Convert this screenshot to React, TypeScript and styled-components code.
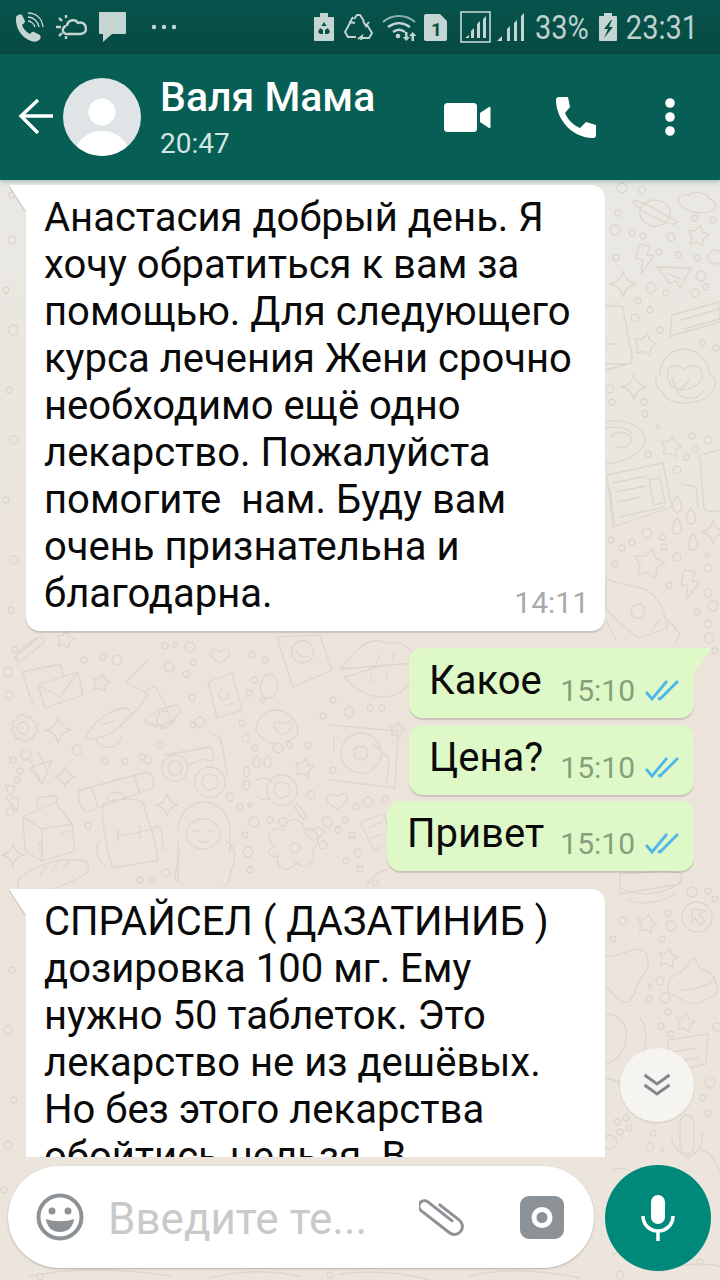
import React from "react";
import styled, { createGlobalStyle } from "styled-components";

const Global = createGlobalStyle`
  html, body { margin: 0; padding: 0; background: #ece5dd; }
  * { box-sizing: border-box; }
`;

const Screen = styled.div`
  width: 720px;
  height: 1280px;
  display: flex;
  flex-direction: column;
  overflow: hidden;
  font-family: Roboto, "Liberation Sans", sans-serif;
  background: #ece5dd;
`;

const StatusBar = styled.div`
  height: 54px;
  flex: none;
  background: linear-gradient(#07544c, #064a43);
  color: #bdd1cd;
  display: flex;
  align-items: center;
  padding: 0 22px 0 15px;
`;
const StatusIcon = styled.svg<{ $gap: number }>`
  flex: none;
  margin-left: ${(p) => p.$gap}px;
  fill: #c5d6d2;
`;
const StatusText = styled.span<{ $gap: number }>`
  flex: none;
  margin-left: ${(p) => p.$gap}px;
  font-size: 29px;
  line-height: 54px;
  transform: scaleY(1.16);
`;

const Header = styled.div`
  height: 126px;
  flex: none;
  position: relative;
  z-index: 1;
  background: #075e55;
  box-shadow: 0 2px 4px rgba(20, 110, 100, 0.3);
  display: flex;
  align-items: center;
  padding-left: 18px;
  color: #fff;
`;
const BackIcon = styled.svg`
  width: 36px;
  height: 36px;
  flex: none;
`;
const Avatar = styled.div`
  width: 78px;
  height: 78px;
  border-radius: 50%;
  background: #dfe5e7;
  margin-left: 9px;
  flex: none;
  overflow: hidden;
`;
const ContactInfo = styled.div`
  margin-left: 19px;
  flex: 1;
`;
const ContactName = styled.div`
  font-size: 41px;
  font-weight: 500;
  line-height: 46px;
  margin-top: -1px;
`;
const ContactSeen = styled.div`
  font-size: 28px;
  line-height: 32px;
  margin-top: 8px;
  color: #d3e6e2;
`;
const HeaderActions = styled.div`
  display: flex;
  align-items: center;
  padding-right: 44px;
  gap: 64px;
`;
const MenuDots = styled.svg`
  margin-left: 4px;
`;

const Chat = styled.div`
  flex: 1;
  position: relative;
  display: flex;
  flex-direction: column;
  overflow: hidden;
  background: linear-gradient(#e9e8e3, #ece4db 45%, #ece5dd);
`;
const Wallpaper = styled.svg`
  position: absolute;
  inset: 0;
  width: 720px;
  height: 1100px;
  fill: none;
  stroke: #dcd6cc;
  stroke-width: 1.3;
  stroke-linecap: round;
  stroke-linejoin: round;
`;
const MessageList = styled.div`
  position: relative;
  height: 977px;
  flex: none;
  overflow: hidden;
  display: flex;
  flex-direction: column;
  padding-top: 5px;
`;
const Bubble = styled.div<{ $out?: boolean; $tail?: boolean; $gap: number }>`
  position: relative;
  flex: none;
  margin-top: ${(p) => p.$gap}px;
  align-self: ${(p) => (p.$out ? "flex-end" : "flex-start")};
  margin-left: 26px;
  margin-right: 26px;
  border-radius: 14px;
  background: ${(p) => (p.$out ? "#def9c7" : "#fff")};
  box-shadow: 0 2px 1px rgba(90, 80, 70, 0.22);
  ${(p) => p.$tail && (p.$out ? "border-top-right-radius: 0;" : "border-top-left-radius: 0;")}
  ${(p) =>
    p.$tail &&
    `&::before {
      content: "";
      position: absolute;
      top: 0;
      ${p.$out ? "right: -17px;" : "left: -17px;"}
      width: 17px;
      height: 26px;
      background: ${
        p.$out
          ? "linear-gradient(to bottom right, #def9c7 49%, transparent 51%)"
          : "linear-gradient(to top right, transparent 44%, #cbc6bf 47%, #fff 52%)"
      };
    }`}
`;
const InBubble = styled(Bubble)<{ $height?: number }>`
  width: 579px;
  padding: 9px 18px 0;
  ${(p) => p.$height && `height: ${p.$height}px;`}
`;
const OutBubble = styled(Bubble)<{ $width: number }>`
  width: ${(p) => p.$width}px;
  height: 70px;
  padding: 0 14px 0 20px;
  display: flex;
  align-items: flex-start;
`;
const MessageLine = styled.div`
  width: fit-content;
  font-size: 40px;
  line-height: 47px;
  color: #0a0a0a;
  white-space: pre;
`;
const OutText = styled.div`
  font-size: 40px;
  line-height: 47px;
  color: #0a0a0a;
  margin-top: 9px;
`;
const InTime = styled.div`
  position: absolute;
  right: 16px;
  bottom: 10px;
  font-size: 30px;
  line-height: 36px;
  color: #a9a9a9;
`;
const OutMeta = styled.div`
  margin-left: auto;
  margin-top: 25px;
  display: flex;
  align-items: center;
  gap: 9px;
  font-size: 30px;
  line-height: 36px;
  color: #86a07c;
`;

const Footer = styled.div`
  flex: 1;
  position: relative;
  display: flex;
  align-items: flex-start;
  padding: 9px 0 0 8px;
  gap: 11px;
`;
const InputBox = styled.div`
  width: 586px;
  height: 102px;
  border-radius: 51px;
  background: #fff;
  box-shadow: 0 1px 2px rgba(90, 80, 70, 0.35);
  display: flex;
  align-items: center;
  padding: 0 30px 0 28px;
`;
const Placeholder = styled.div`
  font-size: 44px;
  color: #c9c9c9;
  margin: 3px 0 0 24px;
  flex: 1;
  white-space: nowrap;
`;
const ClipIcon = styled.svg`
  flex: none;
  margin: 0 53px 4px 0;
`;
const MicButton = styled.div`
  width: 106px;
  height: 106px;
  margin-top: -1px;
  border-radius: 50%;
  background: #00897b;
  flex: none;
  display: flex;
  align-items: center;
  justify-content: center;
`;
const ScrollDown = styled.div`
  position: absolute;
  left: 620px;
  top: 868px;
  width: 74px;
  height: 74px;
  border-radius: 50%;
  background: rgba(245, 244, 242, 0.97);
  box-shadow: 0 1px 2px rgba(90, 80, 70, 0.2);
  display: flex;
  align-items: center;
  justify-content: center;
`;

const Ticks = () => (
  <svg width="36" height="24" viewBox="0 0 36 24" fill="none" stroke="#4fb6ec" strokeWidth="2.8">
    <path d="M2 13l6 7L23 2" />
    <path d="M14 19l2 1L34 2" />
  </svg>
);

const star = (cx: number, cy: number, r: number) => {
  const pts: string[] = [];
  for (let i = 0; i < 10; i++) {
    const a = -Math.PI / 2 + (i * Math.PI) / 5 + 0.2;
    const rr = i % 2 ? r * 0.55 : r;
    pts.push(`${(cx + rr * Math.cos(a)).toFixed(1)} ${(cy + rr * Math.sin(a)).toFixed(1)}`);
  }
  return `M${pts.join("L")}z`;
};
const sparkle = (cx: number, cy: number, r: number) =>
  `M${cx} ${cy - r}Q${cx + 2} ${cy - 2} ${cx + r} ${cy}Q${cx + 2} ${cy + 2} ${cx} ${cy + r}Q${cx - 2} ${cy + 2} ${cx - r} ${cy}Q${cx - 2} ${cy - 2} ${cx} ${cy - r}z`;
const heart = (cx: number, cy: number, r: number) =>
  `M${cx} ${cy + r}C${cx - 2 * r} ${cy} ${cx - r} ${cy - 1.2 * r} ${cx} ${cy - 0.4 * r}C${cx + r} ${cy - 1.2 * r} ${cx + 2 * r} ${cy} ${cx} ${cy + r}z`;
const bolt = (x: number, y: number) =>
  `M${x + 4} ${y}l11 2-3 9 7 1-13 18 2-14-7-2z`;

const DOTS: number[][] = [
  [622,188,5],[642,190,4],[618,213,3],[615,230,5],[632,233,3],[643,236,3],[671,237,4],[695,218,3],[713,220,3],[659,252,3],[678,255,3],[697,258,3],[715,257,7],[616,258,3],[701,276,5],[706,287,3],[695,293,4],[651,288,5],[666,293,3],[638,301,3],[650,310,3],[635,318,4],[660,330,3],[702,343,3],[716,348,3],[610,389,4],[612,402,3],[644,402,3],[645,414,3],
  [658,427,2],[692,436,3],[708,440,4],[648,454,3],[695,449,3],[686,457,3],[677,470,4],[647,533,5],[662,537,3],[664,547,3],[632,542,3],[622,548,3],[611,540,3],[615,564,3],[677,557,4],[708,568,4],[707,555,2],[669,585,3],[708,593,4],[713,606,5],[697,612,3],[708,624,4],[709,638,5],[715,651,3],
  [692,892,5],[708,891,3],[715,899,3],[668,913,3],[623,921,4],[671,926,5],[662,939,3],[613,939,3],[660,981,4],[650,986,2],[649,999,3],[665,998,5],[668,1012,3],[661,1026,3],[671,1034,3],[717,1027,4],[710,1083,5],[703,1098,3],[708,1113,3],[617,1122,3],[626,1118,3],[629,1128,3],[620,1132,3],[653,1133,3],[650,1147,4],[662,1150,2],[610,1142,7],
  [8,672,5],[9,695,4],[15,650,3],[84,660,3],[103,657,3],[117,660,5],[169,667,5],[165,646,3],[190,647,5],[175,645,2],[186,674,3],[193,662,3],[252,655,3],[265,660,3],[255,680,3],[249,693,3],[263,700,2],
  [20,771,3],[26,755,5],[13,760,3],[17,780,3],[77,750,5],[142,757,3],[105,761,3],[125,761,3],[148,760,4],[160,745,3],[200,722,5],[192,698,3],[193,725,3],[242,723,3],[246,738,4],[255,748,3],[278,748,5],[290,745,3],[308,745,3],[323,716,3],[333,700,3],[349,712,5],
  [88,826,3],[152,880,3],[166,873,4],[140,880,3],[230,797,4],[240,807,3],[254,822,5],[250,805,2],[270,820,3],[283,822,4],[245,835,3],[248,852,5],[250,870,3],[311,795,4],[327,822,5],[338,830,3],[323,845,4],[10,812,4],
  [12,195,3],[12,240,4],[6,290,3],[13,330,5],[9,390,3],[14,440,4],[6,500,3],[14,560,4],[11,610,3],[12,970,3],[8,1030,4],[14,1100,3],[8,1145,4],
  [370,708,3],[382,708,3],[368,802,5],[356,807,3],[385,799,3],[345,820,3],[352,835,3],[358,853,4],[346,861,3],[360,869,3],[333,770,3],
  [40,1277,3],[330,1275,3],[620,1275,4],[700,1262,3],[4,1190,3],
];

const Doodles = () => (
  <g>
    {/* upper right margin */}
    <path d="M640 213a15 13 0 1 0 30 0a15 13 0 1 0-30 0M633 201c6-2 30 12 44 21c-2 4-8 2-14-1c-10-4-26-12-30-20z" />
    <path d="M678 201c0-5 8-8 11-5 3-6 18-4 20 3 6 0 8 6 5 10-8 6-30 5-36-8z" />
    <path d={star(698, 236, 11)} />
    <path d={bolt(635, 244)} />
    <path d="M657 267l34 1-11 20-4-7-7 2zM668 274l12 5" />
    <path d={sparkle(623, 284, 13)} />
    <path d="M672 315l48-13v20l-46 13-4 2zM680 320l40-11M684 329l36-10" />
    <path d="M606 306h14c4 0 4 4 4 8l8 42c0 4 0 8-4 8h-22M606 370l22-6M606 344h12" />
    <path d={star(645, 345, 12)} />
    <path d={sparkle(634, 387, 13)} />
    <path d="M660 375c0-16 12-26 24-26s24 10 26 26c6 2 8 10 2 16-6 14-44 18-50 0-8-4-8-14-2-16zM668 372c0-8 12-8 16-2 4-6 16-6 18 2 2 8-4 16-20 18-10 0-16-10-14-18zM672 378l4 10M690 380l-10 10M676 390c4 10 22 12 28 0" />
    {/* donut */}
    <path d="M606 422c14-4 34 2 38 14 4 14-16 26-38 28M611 437c4-6 16-6 20 0 2 8-6 12-14 10M606 428c12-2 22 0 26 6" />
    <path d={star(671, 447, 11)} />
    {/* newspaper */}
    <path d="M607 475l56-12 9 44-59 20zM613 483l34-7M616 492l30-6M618 502l22-5M649 480l11-2 5 24-11 3zM620 517l44-10M610 490l5 36" />
    <path d="M697 457c6-4 18-6 23-7M700 458l4 50c0 4 16 4 16 2M682 484l14 3 2 20" />
    <path d="M677 496c-6 8-6 16 0 16s6-8 0-16zM691 508c-6 8-6 16 0 16s6-8 0-16zM677 518c-6 8-6 16 0 16s6-8 0-16zM693 534c-6 8-6 16 0 16s6-8 0-16z" />
    <path d={sparkle(713, 532, 12)} />
    <path d={star(649, 564, 16)} />
    <path d={bolt(680, 570)} />
    {/* guitar */}
    <path d="M606 578c14 8 22 6 36 10 16 6 22 22 26 40l-30 10-20-16-12-14zM631 611a7 7 0 1 0 14 0a7 7 0 1 0-14 0M652 630l8-10M668 620l12 14-6 12M606 620l10 20" />
    {/* lower right margin */}
    <path d="M620 874c14 0 50-6 62 0l-2 10-60 10zM620 888c20 10 50 6 62-8M626 872l6-8M628 900c14 6 36 2 46-6" />
    <path d="M682 917a15 15 0 1 0 30 0a15 15 0 1 0-30 0M692 909l14 2-7 3 6 8-5 3-5-7-3 5z" />
    <path d={star(647, 924, 10)} />
    <path d={star(668, 958, 10)} />
    <path d="M680 972c4 0 12-16 14-14 4 4 4 10 8 12 8 0 14 8 14 14 4 6 0 12-6 14l-14 6c-8 0-22-8-28-12-2-8 2-16 12-20zM682 990c10 0 22-2 32-10" />
    <path d="M606 956c14 2 26-10 36-6 8 4 8 16 2 24-8 8-8 24-16 28-8 2-14-8-22-16" />
    <path d={star(685, 1023, 10)} />
    <path d="M606 1014c10 0 16 6 20 14 2 18-4 30-20 36M640 1018c4 4 6 12 6 24-2 14-8 26-10 44M606 1078c10 2 14 4 14 8" />
    <path d="M668 1040l40-6-2 30-36 8zM672 1052l24-4M684 1060l14-2" />
    <path d="M680 1124c0-12 14-12 14 0v22c0 10-14 10-14 0zM672 1134c-2 12 10 22 16 22s16-8 14-24M688 1156v4" />
    {/* lower left field */}
    <path d="M14 658l24-20c4-3 8 1 5 5l-22 18c-3 2-6 0-4-3zM18 652l18-14" />
    <path d={star(65, 640, 9)} />
    <path d="M22 672l38-8 4 12M33 705l-11-33M38 685l40-13 5 23-38 13zM38 685l22 12 18-25" />
    <path d={star(101, 683, 9)} />
    {/* scooter */}
    <path d="M86 738c6-16 24-28 38-30 6 0 8 4 6 8-6 8-14 16-26 20-6 2-14 4-18 2zM100 725l14-4M96 738c2 14 24 12 26-2" />
    <path d="M130 716c8-6 14-14 18-22l-22-12M126 682l22-22M143 692l12-6c8 14 14 24 16 36" />
    <path d="M144 722c4-8 18-14 28-16 6-2 10 2 8 6-8 10-18 18-36 10zM152 722c2 10 22 8 24-6M168 712a8 8 0 1 0 4 10" />
    {/* phone, card, blob */}
    <path d="M277 637l43-2 12 35-39 17zM302 641a11 11 0 1 0 1 22a11 11 0 0 0-1-22zM296 650c2 6 8 8 12 6" />
    <path d={heart(220, 655, 8)} />
    <path d="M208 682l24-9 10 37-25 8zM222 690a5 5 0 1 0 6 2M224 706l10-3" />
    <path d="M269 674c8 0 10 12 8 18-4 8-14 8-16 0-2-6 2-18 8-18z" />
    <path d="M256 730c0-12 10-20 20-20s22 10 22 22c0 6-8 8-14 10M256 730c2 6 10 12 18 14" />
    <path d={heart(283, 727, 8)} />
    <path d="M23 714l3 3 4-1 3 5 4 2-1 5 2 4-4 3-1 4-5 0-3 3-4-3h-5l-1-5-4-3 2-4-1-5 5-2 1-4zM17 728a6 6 0 1 0 12 0a6 6 0 1 0-12 0" />
    <path d={sparkle(58, 730, 13)} />
    {/* lips */}
    <path d="M340 669c10-12 20-26 34-28 8-1 14 4 20 2 8-2 14 6 20 10M340 669l74-6M344 677c14-2 26-10 44-12M344 677c8 10 22 20 38 20 14 0 26-8 32-20M376 663l4-8M392 662l2-8M370 682l2-8M386 680l2-8" />
    {/* glasses */}
    <path d="M162 768a13 13 0 1 0 26 0a13 13 0 1 0-26 0M168 768a7 7 0 1 0 14 0a7 7 0 1 0-14 0M195 782a15 15 0 1 0 30 0a15 15 0 1 0-30 0M202 782a8 8 0 1 0 16 0a8 8 0 1 0-16 0" />
    <path d="M165 755l46-8c3 4 3 10 1 14l-8-2-16 6M210 733l10 4c3 14 6 28 8 40" />
    {/* turntable */}
    <path d="M330 725l68 6-3 57-65-8M341 753a20 20 0 1 0 40 0a20 20 0 1 0-40 0M354 753a7 7 0 1 0 14 0a7 7 0 1 0-14 0M373 744l16 14-2 24M334 736v16" />
    <path d={star(397, 730, 8)} />
    <path d={heart(337, 800, 9)} />
    <path d="M360 822l24-8 8 28-18 8zM368 828l14-6M372 838l10-4" />
    <path d="M367 886c4-10 14-16 20-16M375 880a3 3 0 1 0 1 0" />
    <path d={star(304, 768, 10)} />
    {/* paw and lens */}
    <path d="M257 768c-5 0-5-10 0-12 4 2 4 10 0 12zM268 768c-5 0-5-10 0-12 4 2 4 10 0 12zM247 777c-5 0-5-9 0-10 4 2 4 8 0 10zM247 790c-5 0-5-9 0-10 4 2 4 8 0 10zM256 780c8-4 12-2 16 2M257 796c4 4 8 4 12 2" />
    <path d="M267 790a15 15 0 1 0 30 0a15 15 0 1 0-30 0M274 790a8 8 0 1 0 16 0a8 8 0 1 0-16 0M293 805l10 14c2 3 5 0 3-3l-10-14" />
    <path d={heart(334, 801, 8)} transform="translate(-20,32)" />
    {/* crossed tools */}
    <path d="M30 768l22-8-10 24zM30 760l12 24M38 752l8 16" />
    <path d={sparkle(65, 777, 10)} />
    <path d="M5 785l10 2-4 10 8 2-2 12-12-14 4-2z" />
    {/* bedroll + backpack */}
    <path d="M80 790l67-18c6 0 8 10 5 16l-65 24c-8-4-10-18-7-22zM92 788l6 20M134 776l6 18" />
    <path d="M103 804c10-6 32-6 40-2 4 16 14 40 15 58l-45 8c-6-16-12-48-10-64zM107 800c0-10 16-10 18-2M117 836c14-2 30-4 42-10M118 830v12M140 826v12" />
    <path d="M100 842c-6 0-4 20 6 24M156 826c6 2 8 14 6 24" />
    <path d={sparkle(167, 805, 11)} />
    {/* carton */}
    <path d="M23 817l32-15 17 22 3 27-33 10-17-10zM38 797l18-1 1 6M38 797l-1 8M23 817l19 12 30-5M42 829v33M60 834l12-4M40 842c-3 4-3 8 0 9 3-1 3-5 0-9z" />
    <path d={sparkle(13, 855, 11)} />
    <path d="M18 880c12-14 40-22 62-20 12 2 10 12 2 16-18 10-40 18-58 16-6-2-8-8-6-12zM40 876l6-10M52 872l6-10M64 868l6-8" />
    {/* astronaut */}
    <path d="M178 830c0-16 12-28 26-28s26 12 26 28v22M186 834a17 15 0 1 0 34 0a17 15 0 1 0-34 0M193 832c2-3 5-3 7 0M208 832c2-3 5-3 7 0M198 840c3 3 8 3 11 0M180 850l-5 26c0 6 6 8 10 8M178 840v40M226 842c6 0 10 10 8 20l-4 14c0 4-2 10-8 10M184 890c12 2 32 2 40 0" />
    {/* flower */}
    <path d="M276 846c-14-8-4-22 8-16 0-14 20-14 20 0 14-4 20 12 8 20 8 12-8 22-16 12-6 14-22 6-18-6-10 2-14-6-2-10zM290 848a5 5 0 1 0 10 0a5 5 0 1 0-10 0" />
    {/* bottom strip */}
    <path d="M612 1170c10-4 22 0 28 10M700 1150c12 2 18 14 20 24M612 1255c12-8 24-10 40-8M660 1272c20-8 40-10 60-6M30 1276c40-8 90-8 140 0M210 1278c30-8 60-8 90-2M340 1274c30-4 60-2 90 6M470 1276c30-8 70-6 110 2" />
    {DOTS.map(([x, y, r], i) => (
      <circle key={i} cx={x} cy={y} r={r} />
    ))}
  </g>
);

const FIRST_MESSAGE = [
  "Анастасия добрый день. Я",
  "хочу обратиться к вам за",
  "помощью. Для следующего",
  "курса лечения Жени срочно",
  "необходимо ещё одно",
  "лекарство. Пожалуйста",
  "помогите  нам. Буду вам",
  "очень признательна и",
  "благодарна.",
];
const LAST_MESSAGE = [
  "СПРАЙСЕЛ ( ДАЗАТИНИБ )",
  "дозировка 100 мг. Ему",
  "нужно 50 таблеток. Это",
  "лекарство не из дешёвых.",
  "Но без этого лекарства",
  "обойтись нельзя. В",
];

export default function App() {
  return (
    <Screen>
      <Global />
      <StatusBar>
        <StatusIcon $gap={0} width="29" height="30" viewBox="0 0 29 30">
          <path d="M1 5c1-2 4-3 6-2l3 6c0 2-2 3-3 4 1 3 4 7 8 9 1-1 2-3 4-2l6 3c1 2 1 4-1 5-2 2-5 2-8 1C7 26 0 16 1 5z" />
          <path d="M13 1c8 0 14 5 15 14M13 5c5 0 10 4 11 10M13 9c3 0 6 3 7 6" fill="none" stroke="#c5d6d2" strokeWidth="1.3" />
        </StatusIcon>
        <StatusIcon $gap={11} width="32" height="24" viewBox="0 0 32 24">
          <g fill="none" stroke="#c5d6d2" strokeWidth="2.4">
            <path d="M12 11a6 6 0 0 1 11-3c5-2 8 2 8 6 0 3-3 5-6 5H13a4 4 0 0 1-2-8" />
            <path d="M1 12h5M4 3l3 3M4 21l3-3M11 24v-3M11 0v3" />
          </g>
        </StatusIcon>
        <StatusIcon $gap={12} width="27" height="30" viewBox="0 0 27 30">
          <path d="M1 0h25a1 1 0 0 1 1 1v20a1 1 0 0 1-1 1H13l-9 8v-8H1a1 1 0 0 1-1-1V1a1 1 0 0 1 1-1z" />
        </StatusIcon>
        <StatusIcon $gap={25} width="26" height="6" viewBox="0 0 26 6">
          <circle cx="3" cy="3" r="2.2" /><circle cx="13" cy="3" r="2.2" /><circle cx="23" cy="3" r="2.2" />
        </StatusIcon>
        <StatusIcon $gap={137} width="20" height="28" viewBox="0 0 20 28">
          <path fillRule="evenodd" d="M1 4h5V0h8v4h5a1 1 0 0 1 1 1v22a1 1 0 0 1-1 1H1a1 1 0 0 1-1-1V5a1 1 0 0 1 1-1zM10 9l-2.500 4h5zM6 15l-2 4 2 2h3v-4zM14 15l-3 2v4h3l2-2z" />
        </StatusIcon>
        <StatusIcon $gap={9} width="30" height="26" viewBox="0 0 30 26">
          <g fill="none" stroke="#c5d6d2" strokeWidth="1.900">
            <path d="M11 5l3-4h3l4 6M7 9L2 18l3 5h8M24 11l5 8-3 5h-7M10 3l-3 5 5 1M15 25l4-3-1 4M20 7l3 5 3-4" />
          </g>
        </StatusIcon>
        <StatusIcon $gap={9} width="36" height="27" viewBox="0 0 36 27">
          <path d="M1 8c9-8 23-8 32 0" fill="none" stroke="#8fb0a9" strokeWidth="2" />
          <path d="M6 13c7-5 15-5 22 0M11 18c4-3 8-3 12 0" fill="none" stroke="#c5d6d2" strokeWidth="2.300" />
          <circle cx="16" cy="22" r="2.300" />
          <path d="M23 18h2.500v5H28l-3.700 4-3.700-4H23zM32 27h-2.500v-5H27l3.700-4 3.700 4H32z" />
        </StatusIcon>
        <StatusIcon $gap={6} width="23" height="27" viewBox="0 0 23 27">
          <path d="M2 0h14l7 7v18a2 2 0 0 1-2 2H2a2 2 0 0 1-2-2V2a2 2 0 0 1 2-2z" />
          <text x="7" y="22" fill="#074f47" fontSize="19" fontWeight="700" fontFamily="Roboto">1</text>
        </StatusIcon>
        <StatusIcon $gap={13} width="31" height="32" viewBox="0 0 31 32">
          <rect x="1" y="1" width="29" height="30" fill="none" stroke="#c5d6d2" strokeWidth="1.600" />
          <path d="M5 27l4-3v3zM11 27v-7l3-3v10zM17 27V13l3-3v17zM23 27V8l3-3v22z" />
        </StatusIcon>
        <StatusIcon $gap={6} width="28" height="28" viewBox="0 0 28 28">
          <path d="M0 28l5-5v5zM10 28V16l3-3v15zM17 28V10l3-3v21zM24 28V3l3-3v28z" />
        </StatusIcon>
        <StatusText $gap={10}>33%</StatusText>
        <StatusIcon $gap={10} width="18" height="28" viewBox="0 0 18 28">
          <path fillRule="evenodd" d="M1 3h4V0h8v3h4a1 1 0 0 1 1 1v23a1 1 0 0 1-1 1H1a1 1 0 0 1-1-1V4a1 1 0 0 1 1-1zM12 7l-7 9h4l-4 9 9-11h-4l3-7z" />
        </StatusIcon>
        <StatusText $gap={9}>23:31</StatusText>
      </StatusBar>

      <Header>
        <BackIcon viewBox="0 0 36 36" fill="none" stroke="#fff" strokeWidth="3.400">
          <path d="M35 17H3M20 1L3 17l17 17" />
        </BackIcon>
        <Avatar>
          <svg width="78" height="78" viewBox="0 0 78 78" fill="#fff">
            <circle cx="39" cy="34" r="13.500" />
            <path d="M13 70c4-11 14-17 26-17s22 6 26 17c-5 5-15 8-26 8s-21-3-26-8z" />
          </svg>
        </Avatar>
        <ContactInfo>
          <ContactName>Валя Мама</ContactName>
          <ContactSeen>20:47</ContactSeen>
        </ContactInfo>
        <HeaderActions>
          <svg width="47" height="29" viewBox="0 0 47 29" fill="#fff">
            <rect x="0" y="0" width="33" height="29" rx="3.500" />
            <path d="M36 10l9-6c1-.5 1.500 0 1.500 1v19c0 1-.5 1.500-1.500 1l-9-6z" />
          </svg>
          <svg width="41" height="41" viewBox="0 0 41 41" fill="#fff">
            <path d="M1 3c0-2 1-3 3-3h9l2 10-5 6c3 7 8 12 15 15l6-6 10 3v10c0 2-1 3-3 3C17 41 1 22 1 3z" />
          </svg>
          <MenuDots width="12" height="38" viewBox="0 0 12 38" fill="#fff">
            <circle cx="6" cy="5" r="4.800" /><circle cx="6" cy="19" r="4.800" /><circle cx="6" cy="33" r="4.800" />
          </MenuDots>
        </HeaderActions>
      </Header>

      <Chat>
        <Wallpaper viewBox="0 180 720 1100"><Doodles /></Wallpaper>
        <MessageList>
          <InBubble $tail $gap={0} $height={446}>
            {FIRST_MESSAGE.map((line) => <MessageLine key={line}>{line}</MessageLine>)}
            <InTime>14:11</InTime>
          </InBubble>
          <OutBubble $out $tail $gap={17} $width={285}>
            <OutText>Какое</OutText>
            <OutMeta>15:10<Ticks /></OutMeta>
          </OutBubble>
          <OutBubble $out $gap={7} $width={285}>
            <OutText>Цена?</OutText>
            <OutMeta>15:10<Ticks /></OutMeta>
          </OutBubble>
          <OutBubble $out $gap={6} $width={307}>
            <OutText>Привет</OutText>
            <OutMeta>15:10<Ticks /></OutMeta>
          </OutBubble>
          <InBubble $tail $gap={18}>
            {LAST_MESSAGE.map((line) => <MessageLine key={line}>{line}</MessageLine>)}
          </InBubble>
          <ScrollDown>
            <svg width="28" height="24" viewBox="0 0 28 24" fill="none" stroke="#7f898c" strokeWidth="3">
              <path d="M1.500 2l12.500 9 12.500-9M1.500 12l12.500 9 12.500-9" />
            </svg>
          </ScrollDown>
        </MessageList>
        <Footer>
          <InputBox>
            <svg width="48" height="48" viewBox="0 0 48 48" fill="none">
              <circle cx="24" cy="24" r="21.500" stroke="#8d9296" strokeWidth="4" />
              <circle cx="16" cy="18" r="3.500" fill="#8d9296" />
              <circle cx="32" cy="18" r="3.500" fill="#8d9296" />
              <path d="M10 26c8 3 20 3 28 0-1 9-7 13-14 13s-13-4-14-13z" fill="#8d9296" />
            </svg>
            <Placeholder>Введите те...</Placeholder>
            <ClipIcon width="48" height="42" viewBox="0 0 48 42" fill="none" stroke="#8d9296" strokeWidth="3">
              <g transform="translate(24 21) rotate(-52)">
                <path d="M6-10V16a8 8 0 0 1-16 0V-20a5.500 5.500 0 0 1 11 0V12" />
              </g>
            </ClipIcon>
            <svg width="44" height="43" viewBox="0 0 44 43" fill="#8d9296">
              <path fillRule="evenodd" d="M9 0h26a9 9 0 0 1 9 9v25a9 9 0 0 1-9 9H9a9 9 0 0 1-9-9V9a9 9 0 0 1 9-9zM22 11a10.500 10.500 0 1 0 0 21 10.500 10.500 0 0 0 0-21zM22 16a5.500 5.500 0 1 1 0 11 5.500 5.500 0 0 1 0-11z" />
            </svg>
          </InputBox>
          <MicButton>
            <svg width="36" height="46" viewBox="0 0 36 46" fill="none">
              <rect x="11" y="0" width="14" height="29" rx="7" fill="#fff" />
              <path d="M3 21c0 9 7 15 15 15s15-6 15-15M18 36v10" stroke="#fff" strokeWidth="3.500" />
            </svg>
          </MicButton>
        </Footer>
      </Chat>
    </Screen>
  );
}
